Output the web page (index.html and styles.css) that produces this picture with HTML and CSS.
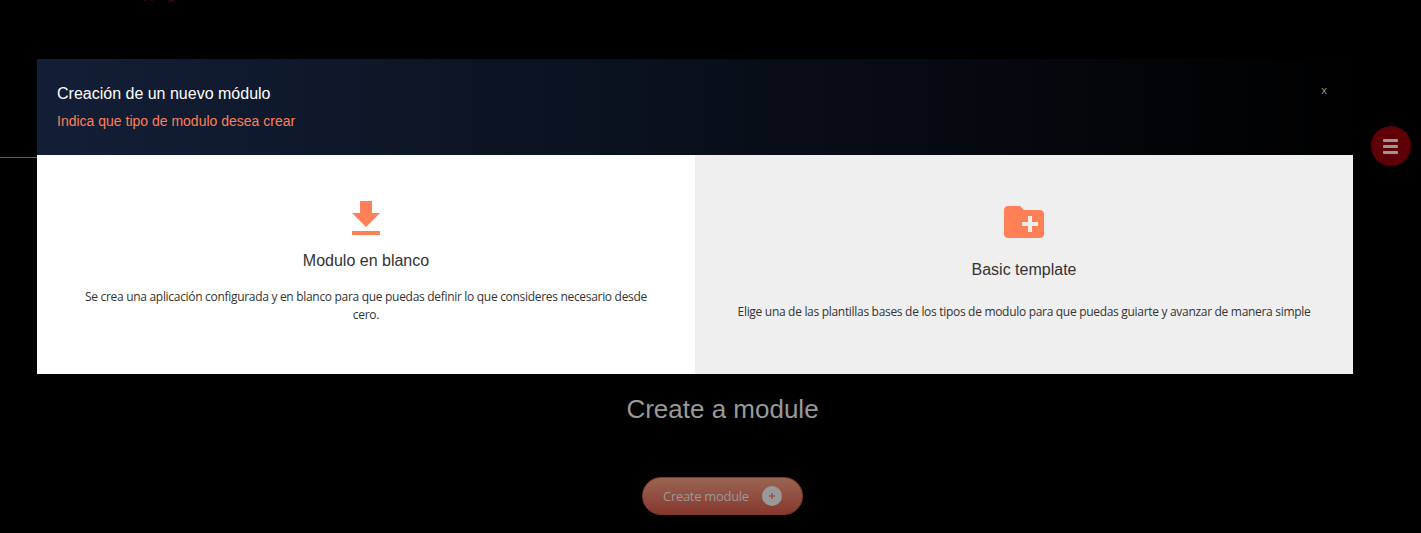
FILE: index.html
```
<!DOCTYPE html>
<html lang="es">
<head>
<meta charset="utf-8">
<title>Create a module</title>
<link rel="stylesheet" href="styles.css">
</head>
<body>
<main class="page">
  <svg class="brand-edge" viewBox="0 0 30 2" aria-hidden="true"><path d="M0 0h2v1h-2zM7 0h2v1h-2zM25 0h5v1h-5zM24 1h4v1h-4z"/></svg>
  <hr class="rule">
  <section class="create">
    <h1 class="create-title">Create a module</h1>
    <button class="create-button"><span class="create-label">Create module</span>
      <svg class="plus" viewBox="0 0 20 20"><circle cx="10" cy="10" r="10"/><path d="M7 10h6M10 7v6"/></svg>
    </button>
  </section>
</main>
<button class="menu-button" aria-label="Menu"><span></span><span></span><span></span></button>
<div class="dialog" role="dialog">
  <header class="dialog-header">
    <div>
      <h2 class="dialog-title">Creación de un nuevo módulo</h2>
      <p class="dialog-subtitle">Indica que tipo de modulo desea crear</p>
    </div>
    <span class="close">x</span>
  </header>
  <div class="options">
    <article class="option">
      <svg class="option-icon" viewBox="0 0 24 24"><path d="M19 9h-4V3H9v6H5l7 7 7-7zM5 18v2h14v-2H5z"/></svg>
      <h3 class="option-title">Modulo en blanco</h3>
      <p class="option-text">Se crea una aplicación configurada y en blanco para que puedas definir lo que consideres necesario desde<br>cero.</p>
    </article>
    <article class="option template">
      <svg class="option-icon" viewBox="0 0 24 24"><path d="M20 6h-8l-2-2H4c-1.11 0-1.99.89-1.99 2L2 18c0 1.11.89 2 2 2h16c1.11 0 2-.89 2-2V8c0-1.11-.89-2-2-2zm-1 8h-3v3h-2v-3h-3v-2h3V9h2v3h3v2z"/></svg>
      <h3 class="option-title">Basic template</h3>
      <p class="option-text">Elige una de las plantillas bases de los tipos de modulo para que puedas guiarte y avanzar de manera simple</p>
    </article>
  </div>
</div>
</body>
</html>
```
FILE: styles.css
```
* { box-sizing: border-box; }
body { margin: 0; height: 533px; overflow: hidden; background: #000; font-family: "Open Sans", "Noto Sans", sans-serif; }
h1, h2, h3, p { margin: 0; font-weight: 400; }
h1, h2, h3, .dialog-subtitle { font-family: "Liberation Sans", Arial, sans-serif; }
button { border: 0; padding: 0; }
.page { height: 533px; display: flex; flex-direction: column; }
.brand-edge { display: block; width: 30px; height: 2px; margin-left: 144px; fill: #48000a; }
.rule { width: 100%; height: 1px; margin: 155px 0 0; border: 0; background: linear-gradient(90deg, #5c5c5c 50%, #000 50%); }
.create { display: flex; flex-direction: column; align-items: center; padding: 236px 0 0 24px; }
.create-title { font-size: 26px; line-height: 30px; color: #999; }
.create-button { display: flex; align-items: center; justify-content: space-between; width: 161px; height: 38px; margin-top: 53px; padding: 0 20px 0 20px; border: 1px solid #84372f; border-radius: 19px; background: linear-gradient(#9a6552, #87382f); color: #999; font: 13px "Open Sans", sans-serif; }
.create-label { white-space: nowrap; letter-spacing: -0.3px; }
.plus { width: 20px; height: 20px; flex: none; fill: #999; stroke: #965348; stroke-width: 1.6; }
.plus circle { stroke: none; }
.menu-button { position: absolute; left: 1371px; top: 126px; width: 40px; height: 40px; padding-right: 1px; border-radius: 50%; background: #5f0007; display: flex; flex-direction: column; align-items: center; justify-content: center; gap: 3px; }
.menu-button span { width: 15px; height: 3px; border-radius: 1px; background: #999; }
.dialog { position: absolute; left: 37px; top: 59px; width: 1316px; height: 315px; }
.dialog-header { height: 96px; display: flex; justify-content: space-between; padding: 25px 26px 0 20px; background: linear-gradient(90deg, #131f37, #000); }
.dialog-title { font-size: 16px; line-height: 19px; color: #fff; }
.dialog-subtitle { margin-top: 10px; font-size: 14px; line-height: 17px; color: #ff7f57; }
.close { margin-top: -1px; font-size: 11px; line-height: 14px; color: #999; }
.options { display: grid; grid-template-columns: 1fr 1fr; height: 219px; }
.option { display: flex; flex-direction: column; align-items: center; padding-top: 40px; background: #fff; text-align: center; color: #333; }
.template { padding-top: 43px; background: #efefef; }
.option-icon { width: 48px; height: 48px; fill: #ff8057; }
.option-title { margin-top: 8px; font-size: 16px; line-height: 20px; }
.option-text { margin-top: 17px; font-size: 12px; line-height: 18px; letter-spacing: -0.305px; white-space: nowrap; }
.template .option-title { margin-top: 14px; }
.template .option-text { margin-top: 23px; }
```
